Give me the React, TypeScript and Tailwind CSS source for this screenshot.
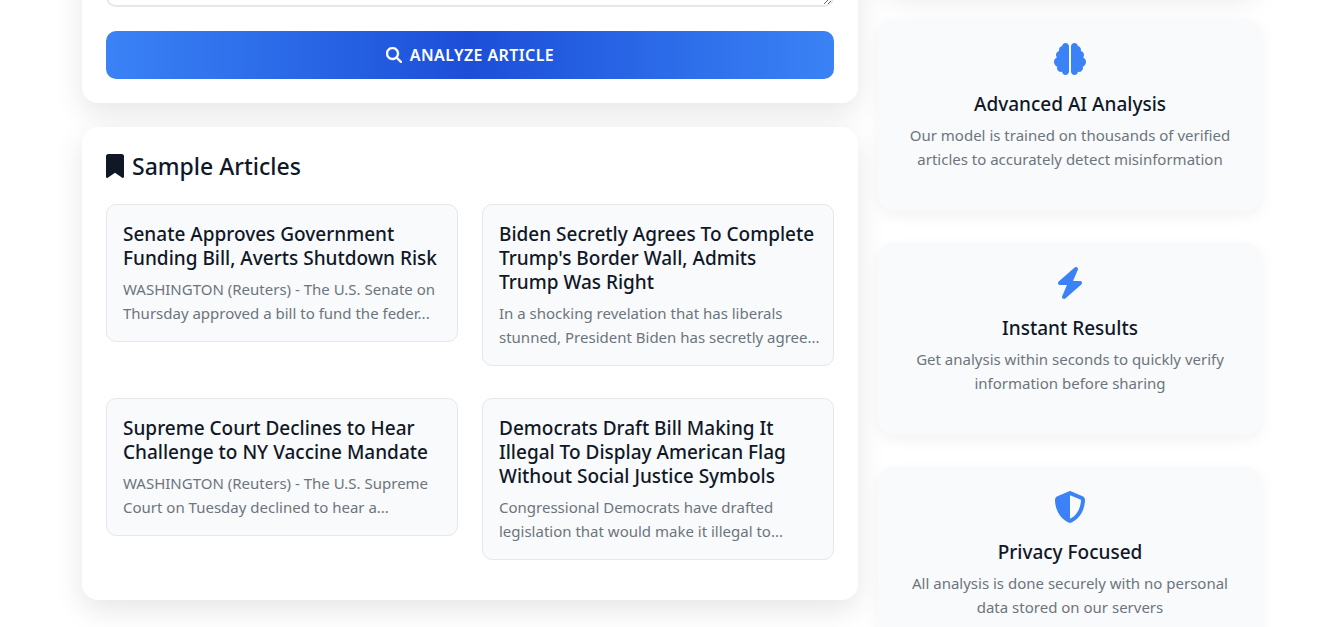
import React from "react";
import { FaBookmark, FaBrain, FaBolt, FaMagnifyingGlass, FaShieldHalved } from "react-icons/fa6";
import type { IconType } from "react-icons";

const articles = [
  {
    title: "Senate Approves Government Funding Bill, Averts Shutdown Risk",
    excerpt: "WASHINGTON (Reuters) - The U.S. Senate on Thursday approved a bill to fund the feder...",
  },
  {
    title: "Biden Secretly Agrees To Complete Trump's Border Wall, Admits Trump Was Right",
    excerpt: "In a shocking revelation that has liberals stunned, President Biden has secretly agree...",
  },
  {
    title: "Supreme Court Declines to Hear Challenge to NY Vaccine Mandate",
    excerpt: "WASHINGTON (Reuters) - The U.S. Supreme Court on Tuesday declined to hear a...",
  },
  {
    title: "Democrats Draft Bill Making It Illegal To Display American Flag Without Social Justice Symbols",
    excerpt: "Congressional Democrats have drafted legislation that would make it illegal to...",
  },
];

const features: { icon: IconType; title: string; text: string }[] = [
  {
    icon: FaBrain,
    title: "Advanced AI Analysis",
    text: "Our model is trained on thousands of verified articles to accurately detect misinformation",
  },
  {
    icon: FaBolt,
    title: "Instant Results",
    text: "Get analysis within seconds to quickly verify information before sharing",
  },
  {
    icon: FaShieldHalved,
    title: "Privacy Focused",
    text: "All analysis is done securely with no personal data stored on our servers",
  },
];

function Panel({ children }: { children: React.ReactNode }) {
  return (
    <section className="rounded-2xl bg-white p-6 shadow-[0_10px_30px_rgba(0,0,0,0.1)]">{children}</section>
  );
}

export default function App() {
  return (
    <div className="h-screen overflow-hidden bg-white pl-2 font-['Noto_Sans','Open_Sans',sans-serif] text-gray-900">
      <main className="mx-auto grid max-w-[1180px] grid-cols-1 gap-5 lg:grid-cols-[776fr_384fr]">
        <div className="-mt-60 flex flex-col gap-6">
          <Panel>
            <textarea
              aria-label="Article text"
              className="block h-[223px] w-full resize-y rounded-[10px] border-2 border-gray-200 px-3 py-2"
            />
            <button
              type="button"
              className="mt-6 flex h-12 w-full items-center justify-center gap-2 rounded-[10px] bg-linear-to-r from-[#3b82f6] via-[#1d4ed8] to-[#3b82f6] text-base font-semibold tracking-wide text-white"
            >
              <FaMagnifyingGlass className="size-4" stroke="currentColor" strokeWidth={12} />
              ANALYZE ARTICLE
            </button>
          </Panel>

          <Panel>
            <h2 className="flex h-[30px] items-center gap-2 text-[23px] leading-8 font-medium">
              <FaBookmark className="h-6 w-[18px]" preserveAspectRatio="none" />
              Sample Articles
            </h2>
            <div className="mt-[23px] mb-4 grid grid-cols-1 items-start gap-x-6 gap-y-8 sm:grid-cols-2">
              {articles.map((article) => (
                <article
                  key={article.title}
                  className="rounded-[10px] border border-gray-200 bg-gray-50 px-4 pt-[17px] pb-4"
                >
                  <h3 className="text-[19px] leading-6 font-medium">{article.title}</h3>
                  <p className="-mr-2 mt-[7px] text-[15px] leading-6 text-[#6c757d]">{article.excerpt}</p>
                </article>
              ))}
            </div>
          </Panel>
        </div>

        <aside className="-mt-[205px] flex flex-col gap-8">
          <section
            aria-hidden="true"
            className="mx-1 h-48 shrink-0 rounded-2xl bg-white shadow-[0_10px_30px_rgba(0,0,0,0.1)]"
          />
          {features.map(({ icon: Icon, title, text }) => (
            <section
              key={title}
              className="flex h-48 flex-col items-center rounded-2xl bg-gray-50 px-6 pt-6 text-center shadow-[0_5px_15px_rgba(0,0,0,0.05)]"
            >
              <Icon className="size-8 text-[#3b82f6]" />
              <h3 className="mt-[17px] text-[19px] leading-6 font-medium">{title}</h3>
              <p className="mt-[7px] text-[15px] leading-6 text-[#6c757d]">{text}</p>
            </section>
          ))}
        </aside>
      </main>
    </div>
  );
}
